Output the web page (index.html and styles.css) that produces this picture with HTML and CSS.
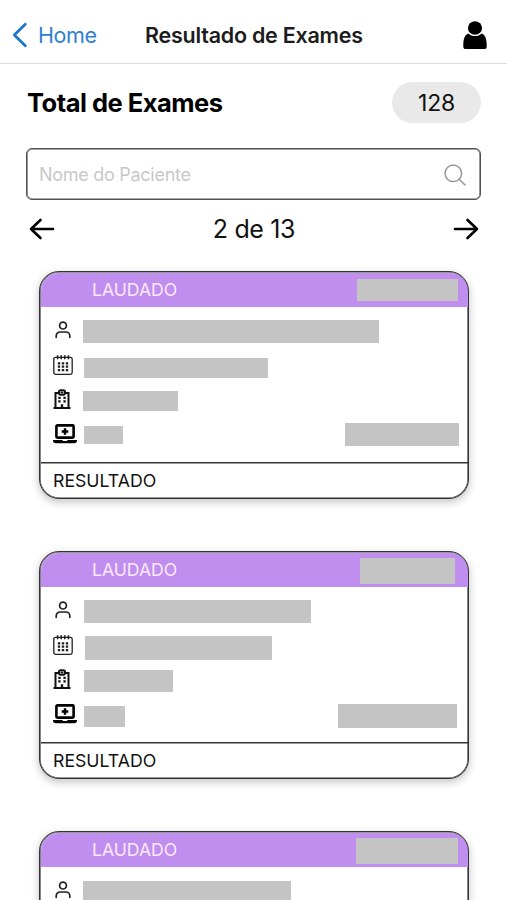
FILE: index.html
```
<!DOCTYPE html>
<html lang="pt-BR">
<head>
<meta charset="utf-8">
<title>Resultado de Exames</title>
<link rel="stylesheet" href="styles.css">
</head>
<body>
<svg class="sprite" aria-hidden="true">
  <symbol id="i-person" viewBox="0 0 16 18"><circle cx="8" cy="4.6" r="3.4"/><path d="M1.2 16.3V15a4 4 0 0 1 4-4h5.6a4 4 0 0 1 4 4v1.3"/></symbol>
  <symbol id="i-calendar" viewBox="0 0 20 20"><rect x=".8" y="2.3" width="18.4" height="17" rx="1.8"/><path d="M4.6.3v4M8.2.3v4M11.8.3v4M15.4.3v4" stroke-width="1.6"/><path d="M4.8 8.3h2.4M8.8 8.3h2.4M12.8 8.3h2.4M4.8 11.7h2.4M8.8 11.7h2.4M12.8 11.7h2.4M4.8 15.1h2.4M8.8 15.1h2.4M12.8 15.1h2.4" stroke-width="2.2"/></symbol>
  <symbol id="i-hospital" viewBox="0 0 18 20"><path d="M.5 18.9h17M2.5 19V4h3.3M15.5 19V4h-3.3" stroke-width="2"/><rect x="6" y="1.2" width="6" height="4.6" rx="1.8" stroke-width="2"/><path d="M9 2.1v2.8M7.6 3.5h2.8" stroke-width="1"/><path d="M5.3 8.8h2.3M10.4 8.8h2.3M5.3 12.4h2.3M10.4 12.4h2.3" stroke-width="2.2"/><path d="M9 19v-3.8" stroke-width="2.4"/></symbol>
  <symbol id="i-laptop" viewBox="0 0 24 20"><rect x="3.4" y="1.4" width="17.2" height="12.2" rx="1" stroke-width="2.6"/><path d="M12 4.2v6.6M8.7 7.5h6.6" stroke-width="2.5"/><path d="M0 16h9.4l.6 1h4l.6-1H24v.8a2.4 2.4 0 0 1-2.4 2.4H2.4A2.4 2.4 0 0 1 0 16.8z" fill="currentColor" stroke="none"/></symbol>
</svg>
<header class="nav">
  <a class="back"><svg class="chevron" viewBox="0 0 16 26"><path d="M13.3 2.2 2.3 13l11 10.8"/></svg><span>Home</span></a>
  <h1>Resultado de Exames</h1>
  <svg class="user" viewBox="0 0 24 28"><ellipse cx="12" cy="7" rx="7.1" ry="6.8"/><path d="M5.2 12.4C1.7 13.7.3 18 .3 24v1.2A2.7 2.7 0 0 0 3 28h18a2.7 2.7 0 0 0 2.7-2.8V24c0-6-1.4-10.3-4.9-11.6-3.7 3.4-9.9 3.4-13.6 0z"/></svg>
</header>
<main>
  <section class="total"><h2>Total de Exames</h2><span class="count">128</span></section>
  <div class="search"><span>Nome do Paciente</span><svg viewBox="0 0 22 22"><circle cx="9.3" cy="9.3" r="8.3"/><path d="m15.2 15.2 5.8 5.8"/></svg></div>
  <nav class="pager">
    <svg viewBox="0 0 26 22"><path d="M24 11H2M11.5 2 2 11l9.5 9"/></svg>
    <span>2 de 13</span>
    <svg viewBox="0 0 26 22"><path d="M2 11h22M14.5 2 24 11l-9.5 9"/></svg>
  </nav>
  <section class="cards">
    <article class="card first">
      <header><span>LAUDADO</span><i class="bar date"></i></header>
      <div class="rows">
        <div class="row"><svg class="person"><use href="#i-person"/></svg><i class="bar name"></i></div>
        <div class="row"><svg class="calendar"><use href="#i-calendar"/></svg><i class="bar day"></i></div>
        <div class="row"><svg class="hospital"><use href="#i-hospital"/></svg><i class="bar unit"></i></div>
        <div class="row"><svg class="laptop"><use href="#i-laptop"/></svg><i class="bar type"></i><i class="bar code"></i></div>
      </div>
      <footer>RESULTADO</footer>
    </article>
    <article class="card second">
      <header><span>LAUDADO</span><i class="bar date"></i></header>
      <div class="rows">
        <div class="row"><svg class="person"><use href="#i-person"/></svg><i class="bar name"></i></div>
        <div class="row"><svg class="calendar"><use href="#i-calendar"/></svg><i class="bar day"></i></div>
        <div class="row"><svg class="hospital"><use href="#i-hospital"/></svg><i class="bar unit"></i></div>
        <div class="row"><svg class="laptop"><use href="#i-laptop"/></svg><i class="bar type"></i><i class="bar code"></i></div>
      </div>
      <footer>RESULTADO</footer>
    </article>
    <article class="card third">
      <header><span>LAUDADO</span><i class="bar date"></i></header>
      <div class="rows">
        <div class="row"><svg class="person"><use href="#i-person"/></svg><i class="bar name"></i></div>
      </div>
    </article>
  </section>
</main>
</body>
</html>
```
FILE: styles.css
```
* { box-sizing: border-box; }
body { margin: 0; height: 900px; overflow: hidden; background: #fff; color: #111; font-family: Inter, "Liberation Sans", sans-serif; }
main { height: 836px; overflow: hidden; display: flow-root; }
h1, h2 { margin: 0; }
svg { display: block; flex: none; fill: none; stroke: currentColor; }
.sprite { display: none; }

.nav { height: 64px; padding: 6px 20px 0 12px; display: grid; grid-template-columns: 133px 1fr 24px; align-items: center; border-bottom: 1px solid #dcdcdc; }
.back { display: flex; align-items: center; gap: 10px; color: #2f7fd0; font-size: 21.5px; letter-spacing: -.4px; }
.chevron { width: 16px; height: 26px; stroke-width: 2.8; stroke-linecap: round; stroke-linejoin: round; color: #1c76d4; }
h1 { font-size: 21.5px; font-weight: 600; letter-spacing: -.24px; white-space: nowrap; color: #1c1c1e; }
.user { width: 24px; height: 28px; fill: #000; stroke: none; }

.total { height: 41px; margin: 18px 26px 0 27px; display: flex; align-items: center; justify-content: space-between; }
h2 { font-size: 25.5px; font-weight: 700; letter-spacing: -.5px; color: #000; white-space: nowrap; }
.count { width: 89px; height: 41px; border-radius: 21px; background: #e9e9e9; display: flex; align-items: center; justify-content: center; font-size: 23px; letter-spacing: -.2px; }
.search { height: 52px; margin: 25px 26px 0; padding: 1px 14px 0 12px; display: flex; align-items: center; justify-content: space-between; border: 1px solid #505050; box-shadow: inset 0 0 0 .6px #505050; border-radius: 6px; color: #c8c8c8; font-size: 18px; letter-spacing: -.28px; }
.search svg { width: 22px; height: 22px; stroke: #989898; stroke-width: 1.5; stroke-linecap: round; }
.pager { height: 58px; padding: 0 28px 0 29px; display: flex; align-items: center; justify-content: space-between; font-size: 25px; letter-spacing: -.35px; }
.pager svg { width: 26px; height: 22px; color: #000; stroke-width: 2.6; stroke-linecap: round; stroke-linejoin: round; }

.cards { padding: 13px 38px 0 39px; display: flex; flex-direction: column; gap: 52px; }
.card { height: 228px; flex: none; overflow: hidden; border: 1px solid #333338; border-radius: 20px; background: #fff; box-shadow: inset 0 0 0 .6px #333338, 0 3px 8px rgba(0,0,0,.24); display: flex; flex-direction: column; }
.card header { height: 34px; flex: none; margin: .5px .5px 0; padding-left: 51.5px; display: flex; background: #c08eef; border-radius: 18px 18px 0 0; color: #fbe9ff; font-size: 17.6px; line-height: 34px; }
.rows { height: 155.5px; flex: none; padding: 5px 0 0 13px; }
.row { height: 36px; display: flex; align-items: flex-start; }
.row:nth-child(3) { height: 33px; }
.row:nth-child(4) { height: 34px; }
.bar { display: block; flex: none; background: #c4c4c4; }
.card footer { flex: 1; margin: 0 .5px; padding-left: 12.5px; border-top: 1px solid #333338; box-shadow: inset 0 .6px #333338; font-size: 17.7px; line-height: 35px; }

.person { width: 16px; height: 18px; margin: 9px 0 0 2px; stroke-width: 1.7; stroke-linecap: round; color: #222; }
.calendar { width: 20px; height: 20px; margin-top: 7px; stroke-width: 1.3; color: #222; }
.hospital { width: 18px; height: 20px; margin-top: 5px; color: #111; }
.laptop { width: 24px; height: 20px; margin-top: 7px; color: #000; }

.date { margin-left: auto; }
.code { margin-left: auto; }
.first .date { width: 101px; height: 22px; margin-top: 6.5px; margin-right: 10px; }
.first .name { width: 296px; height: 23px; margin: 8px 0 0 12px; }
.first .day { width: 184px; height: 20px; margin: 10px 0 0 11px; }
.first .unit { width: 95px; height: 20px; margin: 7px 0 0 12px; }
.first .type { width: 39px; height: 18px; margin: 9px 0 0 7px; }
.first .code { width: 114px; height: 23px; margin-top: 6px; margin-right: 9px; }
.second .date { width: 95px; height: 26px; margin-top: 5px; margin-right: 12.5px; }
.second .name { width: 227px; height: 23.5px; margin: 8px 0 0 13px; }
.second .day { width: 187px; height: 24px; margin: 8px 0 0 12px; }
.second .unit { width: 89px; height: 22px; margin: 6px 0 0 13px; }
.second .type { width: 41px; height: 21px; margin: 9px 0 0 7px; }
.second .code { width: 119px; height: 24px; margin-top: 7px; margin-right: 11px; }
.third .date { width: 102px; height: 26px; margin-top: 5px; margin-right: 10px; }
.third .name { width: 208px; height: 23px; margin: 9px 0 0 12px; }
```
